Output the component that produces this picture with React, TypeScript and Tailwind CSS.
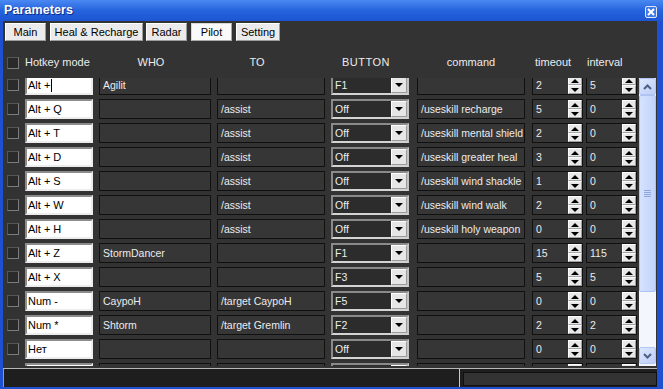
import React from "react";

type Row = {
  key: string;
  who: string;
  to: string;
  btn: string;
  cmd: string;
  t: string;
  i: string;
  cursor?: boolean;
};

const rows: Row[] = [
  { key: "Alt +", who: "Agilit", to: "", btn: "F1", cmd: "", t: "2", i: "5", cursor: true },
  { key: "Alt + Q", who: "", to: "/assist", btn: "Off", cmd: "/useskill recharge", t: "5", i: "0" },
  { key: "Alt + T", who: "", to: "/assist", btn: "Off", cmd: "/useskill mental shield", t: "2", i: "0" },
  { key: "Alt + D", who: "", to: "/assist", btn: "Off", cmd: "/useskill greater heal", t: "3", i: "0" },
  { key: "Alt + S", who: "", to: "/assist", btn: "Off", cmd: "/useskill wind shackle", t: "1", i: "0" },
  { key: "Alt + W", who: "", to: "/assist", btn: "Off", cmd: "/useskill wind walk", t: "2", i: "0" },
  { key: "Alt + H", who: "", to: "/assist", btn: "Off", cmd: "/useskill holy weapon", t: "0", i: "0" },
  { key: "Alt + Z", who: "StormDancer", to: "", btn: "F1", cmd: "", t: "15", i: "115" },
  { key: "Alt + X", who: "", to: "", btn: "F3", cmd: "", t: "5", i: "5" },
  { key: "Num -", who: "CaypoH", to: "/target CaypoH", btn: "F5", cmd: "", t: "0", i: "0" },
  { key: "Num *", who: "Shtorm", to: "/target Gremlin", btn: "F2", cmd: "", t: "2", i: "2" },
  { key: "Нет", who: "", to: "", btn: "Off", cmd: "", t: "0", i: "0" },
  { key: "", who: "", to: "", btn: "", cmd: "", t: "", i: "" },
];

function Check() {
  return (
    <div className="w-[12px] h-[12px] border border-[#555] border-b-[#7c7c7c] border-r-[#7c7c7c] bg-[#2a2a2a]" />
  );
}

function DarkBox({ w, text }: { w: string; text: string }) {
  return (
    <div
      className={`${w} h-[20px] border border-[#101010] bg-[#363636] text-[#ececec] pl-[3px] leading-[18px] whitespace-nowrap overflow-hidden`}
    >
      {text}
    </div>
  );
}

function TriDown() {
  return (
    <div className="w-0 h-0 border-l-[4px] border-r-[4px] border-t-[4px] border-l-transparent border-r-transparent border-t-black" />
  );
}
function TriUp() {
  return (
    <div className="w-0 h-0 border-l-[4px] border-r-[4px] border-b-[4px] border-l-transparent border-r-transparent border-b-black" />
  );
}

function Combo({ text }: { text: string }) {
  return (
    <div className="w-[78px] h-[20px] border-2 border-[#8a8a8a] border-b-[#d4d4d4] border-r-[#c4c4c4] bg-[#2c2c2c] flex">
      <div className="flex-1 text-[#ececec] pl-[2px] leading-[17px]">{text}</div>
      <div className="w-[16px] h-full bg-[#e6e6e6] border border-white border-b-[#9a9a9a] border-r-[#9a9a9a] flex items-center justify-center">
        <TriDown />
      </div>
    </div>
  );
}

function Spin({ text }: { text: string }) {
  return (
    <div className="w-[51px] h-[20px] border border-[#101010] bg-[#363636] flex">
      <div className="flex-1 text-[#ececec] pl-[3px] leading-[18px]">{text}</div>
      <div className="w-[14px] h-full flex flex-col">
        <div className="flex-1 bg-[#e8e8e8] border border-white border-b-[#a0a0a0] border-r-[#a0a0a0] flex items-center justify-center">
          <TriUp />
        </div>
        <div className="flex-1 bg-[#e8e8e8] border border-white border-b-[#a0a0a0] border-r-[#a0a0a0] flex items-center justify-center">
          <TriDown />
        </div>
      </div>
    </div>
  );
}

function Tab({ w, label, active }: { w: string; label: string; active?: boolean }) {
  return (
    <div
      className={`${w} h-[18px] flex items-center justify-center text-black border whitespace-nowrap ${
        active
          ? "bg-[#fafafa] border-[#d8d8d8] border-b-[#a8a8a8] border-r-[#a8a8a8]"
          : "bg-[#ebebeb] border-white border-b-[#9c9c9c] border-r-[#9c9c9c]"
      }`}
    >
      {label}
    </div>
  );
}

export default function App() {
  return (
    <div className="w-[663px] h-[389px] bg-[#1f50cf] flex flex-col font-['Liberation_Sans',Arial,sans-serif] text-[10.5px] overflow-hidden">
      {/* Title bar */}
      <div className="h-[21px] flex items-center justify-between bg-gradient-to-b from-[#4a88f2] via-[#2563dd] to-[#1d55d2] pl-[4px] pr-[6px]">
        <span className="text-white font-bold text-[12.5px] tracking-[0.1px] [text-shadow:1px_1px_0_#0a2a8a]">
          Parameters
        </span>
        <div className="w-[12px] h-[12px] mt-[2px] bg-[#3f78e8] border border-[#dfe8fb] rounded-[2px] flex items-center justify-center">
          <svg width="8" height="8" viewBox="0 0 8 8">
            <path d="M1 1 L7 7 M7 1 L1 7" stroke="white" strokeWidth="2" />
          </svg>
        </div>
      </div>

      {/* Body */}
      <div className="flex-1 ml-[3px] mr-[6px] mb-[2px] bg-[#333333] flex flex-col">
        {/* Tabs */}
        <div className="flex mt-[2px] ml-[2px] h-[18px] text-[11px]">
          <Tab w="w-[41px]" label="Main" />
          <div className="w-[4px]" />
          <Tab w="w-[93px]" label="Heal & Recharge" />
          <div className="w-[3px]" />
          <Tab w="w-[41px]" label="Radar" />
          <div className="w-[4px]" />
          <Tab w="w-[41px]" label="Pilot" active />
          <div className="w-[4px]" />
          <Tab w="w-[44px]" label="Setting" />
        </div>

        {/* Header */}
        <div className="h-[37px] flex items-center text-[#ececec] pt-[6px] text-[11px]">
          <div className="ml-[4px]">
            <Check />
          </div>
          <div className="ml-[6px] w-[74px]">Hotkey mode</div>
          <div className="w-[112px] text-center pr-[8px]">WHO</div>
          <div className="ml-[6px] w-[108px] text-center pr-[28px]">TO</div>
          <div className="ml-[6px] w-[78px] text-center pr-[8px] tracking-[0.5px]">BUTTON</div>
          <div className="ml-[8px] w-[108px] text-center">command</div>
          <div className="ml-[7px] w-[51px] pl-[3px]">timeout</div>
          <div className="ml-[3px] w-[51px] pl-[1px]">interval</div>
        </div>

        {/* Rows + scrollbar */}
        <div className="h-[288px] flex">
          <div className="w-[636px] h-full overflow-hidden">
            <div className="-mt-[3px]">
              {rows.map((r, idx) => (
                <div key={idx} className="h-[24px] flex items-start">
                  <div className="ml-[4px] mt-[4px]">
                    <Check />
                  </div>
                  <div className="ml-[6px] w-[68px] h-[20px] bg-white border-2 border-[#8c8c8c] border-b-[#ececec] border-r-[#ececec] text-black pl-[1px] leading-[16px] flex items-center text-[11px]">
                    <span>{r.key}</span>
                    {r.cursor && <span className="ml-[1px] w-[1px] h-[13px] bg-black" />}
                  </div>
                  <div className="ml-[6px]">
                    <DarkBox w="w-[112px]" text={r.who} />
                  </div>
                  <div className="ml-[6px]">
                    <DarkBox w="w-[108px]" text={r.to} />
                  </div>
                  <div className="ml-[6px]">
                    <Combo text={r.btn} />
                  </div>
                  <div className="ml-[8px]">
                    <DarkBox w="w-[108px]" text={r.cmd} />
                  </div>
                  <div className="ml-[7px]">
                    <Spin text={r.t} />
                  </div>
                  <div className="ml-[3px]">
                    <Spin text={r.i} />
                  </div>
                </div>
              ))}
            </div>
          </div>
          {/* Scrollbar */}
          <div className="w-[17px] h-full bg-[#f3f6fd] flex flex-col">
            <div className="h-[17px] rounded-[2px] border border-[#b3c6f3] bg-gradient-to-br from-[#dde7fe] to-[#bccdf8] flex items-center justify-center">
              <svg width="9" height="6" viewBox="0 0 9 6">
                <path d="M1 5 L4.5 1.5 L8 5" stroke="#4d6185" strokeWidth="2" fill="none" />
              </svg>
            </div>
            <div className="h-[197px] rounded-[2px] border border-[#aec2f2] bg-gradient-to-r from-[#d6e2fe] to-[#c2d3fb] flex flex-col items-center justify-center gap-[1px]">
              <div className="w-[7px] h-[1px] bg-[#8ea6dc]" />
              <div className="w-[7px] h-[1px] bg-[#8ea6dc]" />
              <div className="w-[7px] h-[1px] bg-[#8ea6dc]" />
              <div className="w-[7px] h-[1px] bg-[#8ea6dc]" />
            </div>
            <div className="flex-1" />
            <div className="h-[17px] mb-[2px] rounded-[2px] border border-[#b3c6f3] bg-gradient-to-br from-[#dde7fe] to-[#bccdf8] flex items-center justify-center">
              <svg width="9" height="6" viewBox="0 0 9 6">
                <path d="M1 1 L4.5 4.5 L8 1" stroke="#4d6185" strokeWidth="2" fill="none" />
              </svg>
            </div>
          </div>
        </div>

        {/* Status bar */}
        <div className="mt-[2px] flex-1 flex border-t border-[#b8b8b8] bg-[#1e1e1e]">
          <div className="w-[456px] border-l border-[#9a9a9a]" />
          <div className="w-[1px] bg-[#c8c8c8]" />
          <div className="flex-1 pl-[3px] pt-[3px] pb-[1px]">
            <div className="h-full bg-[#333333] border border-[#111]" />
          </div>
        </div>
      </div>
    </div>
  );
}
